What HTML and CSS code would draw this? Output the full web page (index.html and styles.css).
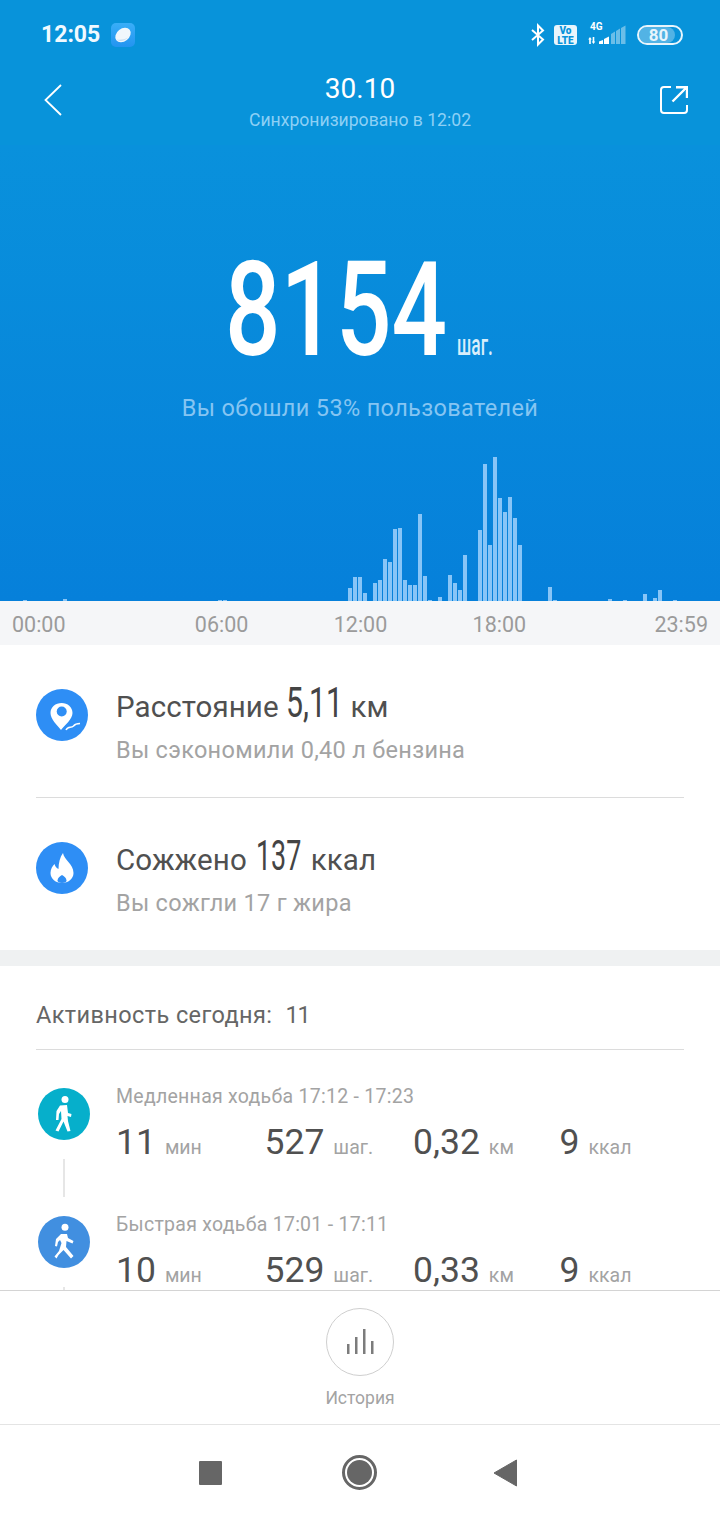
FILE: index.html
```html
<!DOCTYPE html>
<html lang="ru">
<head>
<meta charset="utf-8">
<title>30.10</title>
<link rel="stylesheet" href="styles.css">
</head>
<body>
<div class="screen">
  <div class="top">
    <div class="status">
      <div class="status-left">
        <span class="clock">12:05</span>
        <svg class="app-icon" width="24" height="24" viewBox="0 0 24 24"><defs><linearGradient id="appg" x1="0" y1="0" x2="0" y2="1"><stop offset="0" stop-color="#39aef8"/><stop offset="1" stop-color="#2394f0"/></linearGradient></defs><rect width="24" height="24" rx="5" fill="url(#appg)"/><ellipse cx="12" cy="12" rx="8.500" ry="6.300" transform="rotate(-38 12 12)" fill="#f1f7fc"/><path d="M5.500 16.500 C8 19 14 18 17 14.500 C14 16.500 9 17 5.500 16.500Z" fill="#c9dff2"/></svg>
      </div>
      <div class="status-right">
        <svg class="bt" width="16" height="24" viewBox="0 0 16 24"><path d="M2 7 L13 16.500 L8 21.500 V2.500 L13 7.500 L2 17" fill="none" stroke="#fff" stroke-width="2"/></svg>
        <span class="volte">Vo<br>LTE</span>
        <svg class="signal" width="38" height="24" viewBox="0 0 38 24"><g fill="#fff"><path d="M2 14 L3.800 16.500 H2.800 V21 H1.200 V16.500 H.200Z"/><path d="M5.500 21 L3.700 18.500 H4.700 V14 H6.300 V18.500 H7.300Z"/><path d="M11 21 V18.500 L15 17 V21Z"/><path d="M16 21 V16 L21 13.500 V21Z"/></g><g fill="#fff" opacity=".4"><path d="M23 21 V11 L27 8.500 V21Z"/><path d="M28 21 V8 L32 5.500 V21Z"/><path d="M33 21 V5 L37.500 2.500 V21Z"/></g></svg>
        <span class="four-g">4G</span>
        <span class="battery"><span class="battery-fill"></span><span class="battery-num">80</span></span>
      </div>
    </div>
    <div class="titlebar">
      <svg class="back" width="20" height="32" viewBox="0 0 20 32"><path d="M17 1 L1.500 16 L17 31" fill="none" stroke="#fff" stroke-width="1.800"/></svg>
      <div class="title">
        <div class="title-main">30.10</div>
        <div class="title-sub">Синхронизировано в 12:02</div>
      </div>
      <svg class="share" width="28" height="28" viewBox="0 0 28 28"><path d="M11 1 H4 A3 3 0 0 0 1 4 V24 A3 3 0 0 0 4 27 H24 A3 3 0 0 0 27 24 V19" fill="none" stroke="#fff" stroke-width="2"/><path d="M12.500 15.500 L26.500 1.500 M16 1.200 H27 V12" fill="none" stroke="#fff" stroke-width="2.400"/></svg>
    </div>
  </div>

  <div class="hero">
    <div class="steps"><span class="steps-num">8154</span><span class="steps-unit">шаг.</span></div>
    <div class="beat">Вы обошли 53% пользователей</div>
    <svg class="chart" width="720" height="150" viewBox="0 0 720 150">
      <g fill="#88c5f7">
        <rect x="23" y="149" width="4" height="1"/><rect x="63" y="148" width="4" height="2"/><rect x="218" y="149" width="4" height="1"/><rect x="223" y="149" width="4" height="1"/>
        <rect x="348" y="137" width="4" height="13"/><rect x="353" y="126" width="4" height="24"/><rect x="358" y="126" width="4" height="24"/><rect x="363" y="142" width="4" height="8"/>
        <rect x="373" y="132" width="4" height="18"/><rect x="378" y="129" width="4" height="21"/><rect x="383" y="108" width="4" height="42"/><rect x="388" y="111" width="4" height="39"/>
        <rect x="393" y="78" width="4" height="72"/><rect x="398" y="77" width="4" height="73"/><rect x="403" y="129" width="4" height="21"/><rect x="408" y="134" width="4" height="16"/>
        <rect x="413" y="134" width="4" height="16"/><rect x="418" y="63" width="4" height="87"/><rect x="423" y="125" width="4" height="25"/><rect x="428" y="149" width="4" height="1"/>
        <rect x="438" y="146" width="4" height="4"/><rect x="448" y="124" width="4" height="26"/><rect x="453" y="132" width="4" height="18"/><rect x="458" y="139" width="4" height="11"/>
        <rect x="463" y="104" width="4" height="46"/><rect x="478" y="79" width="4" height="71"/><rect x="483" y="13" width="4" height="137"/><rect x="488" y="94" width="4" height="56"/>
        <rect x="493" y="6" width="4" height="144"/><rect x="498" y="47" width="4" height="103"/><rect x="503" y="61" width="4" height="89"/><rect x="508" y="46" width="4" height="104"/>
        <rect x="513" y="67" width="4" height="83"/><rect x="518" y="94" width="4" height="56"/><rect x="548" y="136" width="4" height="14"/><rect x="553" y="149" width="4" height="1"/>
        <rect x="608" y="148" width="4" height="2"/><rect x="623" y="149" width="4" height="1"/><rect x="643" y="143" width="4" height="7"/><rect x="653" y="147" width="4" height="3"/>
        <rect x="658" y="139" width="4" height="11"/><rect x="673" y="149" width="4" height="1"/>
      </g>
    </svg>
  </div>

  <div class="axis"><span>00:00</span><span>06:00</span><span>12:00</span><span>18:00</span><span>23:59</span></div>

  <section class="summary">
    <div class="sum-row">
      <svg class="sum-icon" width="52" height="52" viewBox="0 0 52 52"><circle cx="26" cy="26" r="26" fill="#2e8ef5"/><path d="M25.700 14 C19.500 14 14.500 18 14.500 24 C14.500 30 21 36 25 41 C29 36 36.500 30 36.500 24 C36.500 18 31.500 14 25.700 14Z" fill="#fff"/><circle cx="25.700" cy="22.500" r="5" fill="#2e8ef5"/><path d="M30 41 C32 36.500 35 39.500 37.500 37 C39 35 41 34.500 44 34.500" fill="none" stroke="#2e8ef5" stroke-width="4"/><path d="M30 41 C32 36.500 35 39.500 37.500 37 C39 35 41 34.500 44 34.500" fill="none" stroke="#fff" stroke-width="1.500"/></svg>
      <div class="sum-text">
        <div class="sum-main">Расстояние <span class="sum-num dist">5,11</span> км</div>
        <div class="sum-sub">Вы сэкономили 0,40 л бензина</div>
      </div>
    </div>
    <div class="sum-row">
      <svg class="sum-icon" width="52" height="52" viewBox="0 0 52 52"><circle cx="26" cy="26" r="26" fill="#2e8ef5"/><path d="M27 11 C28 18 37.500 22 37.500 31 C37.500 37 32 41 26 41 C20 41 14.500 37 14.500 31 C14.500 27 16.500 24 18.500 22 C19.500 25 20.500 26 22.500 27 C22.500 21 24 15 27 11Z" fill="#fff"/><path d="M26 33 C24 34 21.500 36 21.500 38.500 C21.500 40 23 41 26 41 C29 41 30.500 40 30.500 38.500 C30.500 36 28 34 26 33Z" fill="#2e8ef5"/></svg>
      <div class="sum-text">
        <div class="sum-main">Сожжено <span class="sum-num cal">137</span> ккал</div>
        <div class="sum-sub">Вы сожгли 17 г жира</div>
      </div>
    </div>
  </section>

  <section class="activity">
    <div class="act-head"><span>Активность сегодня:</span><span class="act-count">11</span></div>
    <div class="act-list">
      <div class="act-row">
        <div class="act-rail">
          <svg width="52" height="52" viewBox="0 0 52 52"><circle cx="26" cy="26" r="26" fill="#06afcb"/><circle cx="27" cy="11.500" r="3.500" fill="#fff"/><path d="M22 17.500 L29 17 L30 25 L33.500 26 L33 29 L29.500 28 L30 33 L32.500 43 L29.500 43.500 L25.500 33.500 L20.500 43.500 L17.500 42.500 L23.500 31 L23 23 L21 26 L20.500 32 L18 32 L18.500 23Z" fill="#fff"/></svg>
          <span class="rail-line"></span>
        </div>
        <div class="act-body">
          <div class="act-label">Медленная ходьба 17:12 - 17:23</div>
          <div class="act-stats">
            <div class="stat"><b>11</b><i>мин</i></div>
            <div class="stat"><b>527</b><i>шаг.</i></div>
            <div class="stat"><b>0,32</b><i>км</i></div>
            <div class="stat"><b>9</b><i>ккал</i></div>
          </div>
        </div>
      </div>
      <div class="act-row">
        <div class="act-rail">
          <svg width="52" height="52" viewBox="0 0 52 52"><circle cx="26" cy="26" r="26" fill="#418fe0"/><circle cx="27" cy="11.300" r="3.500" fill="#fff"/><path d="M23 18 L29 18 L30 22 L35.500 25 L34.500 27.500 L28.500 25 L28 31 L35.500 40 L33 42.500 L25.500 34 L20.500 39 L18.500 42.500 L16.500 40.500 L21 35 L23.500 27 L22 24 L20 26 L19 30.500 L17 30 L18 23Z" fill="#fff"/></svg>
          <span class="rail-line"></span>
        </div>
        <div class="act-body">
          <div class="act-label">Быстрая ходьба 17:01 - 17:11</div>
          <div class="act-stats">
            <div class="stat"><b>10</b><i>мин</i></div>
            <div class="stat"><b>529</b><i>шаг.</i></div>
            <div class="stat"><b>0,33</b><i>км</i></div>
            <div class="stat"><b>9</b><i>ккал</i></div>
          </div>
        </div>
      </div>
    </div>
  </section>

  <div class="history">
    <div class="hist-btn"><svg width="30" height="26" viewBox="0 0 30 26"><g fill="#7c7c7c"><rect x="2" y="15" width="2.500" height="10"/><rect x="10" y="8" width="2.500" height="17"/><rect x="18" y="0" width="2.500" height="25"/><rect x="26" y="12" width="2.500" height="13"/></g></svg></div>
    <div class="hist-label">История</div>
  </div>

  <nav class="sysnav">
    <span class="nav-square"></span>
    <span class="nav-circle"><span class="nav-dot"></span></span>
    <svg width="24" height="28" viewBox="0 0 24 28"><path d="M23.500 1 V27 L1 14Z" fill="#666" stroke="#666" stroke-linejoin="round"/></svg>
  </nav>
</div>
</body>
</html>
```
FILE: styles.css
```css
* { box-sizing: border-box; }
html, body { margin: 0; padding: 0; }
body { font-family: Roboto, "Noto Sans", sans-serif; background: #fff; }
.screen { width: 720px; height: 1520px; overflow: hidden; display: flex; flex-direction: column; }

.top { height: 145px; background: #0893da; color: #fff; display: flex; flex-direction: column; }
.status { height: 70px; padding: 22px 37px 0 41px; display: flex; justify-content: space-between; align-items: flex-start; }
.status-left { display: flex; align-items: center; gap: 11px; }
.clock { font-size: 23px; font-weight: 700; color: #f0f9ff; line-height: 26px; }
.status-right { display: flex; align-items: center; position: relative; height: 26px; }
.bt { flex: none; }
.volte { width: 23px; height: 20px; margin-left: 8px; background: #e8f5fc; color: #0893da; border-radius: 3px; font-size: 10px; line-height: 9.500px; font-weight: 900; text-align: center; padding-top: 1px; }
.signal { margin-left: 11px; flex: none; }
.four-g { position: absolute; left: 60px; top: 0; font-size: 10px; line-height: 10px; font-weight: 700; }
.battery { width: 46px; height: 20px; border: 2px solid #e8f5fc; border-radius: 10px; position: relative; margin-left: 11px; padding-right: 3px; display: flex; align-items: center; justify-content: center; overflow: hidden; }
.battery-fill { position: absolute; left: 0; top: 0; bottom: 0; width: 85%; background: rgba(255,255,255,.3); border-radius: 8px; }
.battery-num { position: relative; font-size: 17px; font-weight: 700; line-height: 16px; color: #e8f5fc; }

.titlebar { flex: 1; padding: 0 32px 0 44px; display: flex; align-items: flex-start; justify-content: space-between; position: relative; }
.back { margin-top: 14px; }
.share { margin-top: 16px; }
.title { position: absolute; left: 0; right: 0; top: 1px; text-align: center; }
.title-main { font-size: 28px; line-height: 36px; color: #fff; }
.title-sub { font-size: 17.600px; line-height: 26px; color: #8dd0f5; }

.hero { height: 456px; background: linear-gradient(#0991dc, #0680da); position: relative; display: flex; flex-direction: column; align-items: center; }
.steps { margin-top: 95px; display: flex; align-items: baseline; height: 140px; width: 100%; padding-left: 225px; }
.steps-num { font-size: 132px; font-weight: 500; line-height: 140px; color: #fff; display: inline-block; transform: scaleX(.74); transform-origin: 0 50%; width: 221px; margin-right: 11px; }
.steps-unit { font-size: 29px; font-weight: 500; line-height: 26px; color: #d8eefb; transform: scaleX(.6); transform-origin: 0 50%; }
.beat { margin-top: 13px; font-size: 23.500px; line-height: 30px; letter-spacing: .35px; color: #85c5f2; }
.chart { position: absolute; left: 0; bottom: 0; display: block; }

.axis { height: 44px; background: #f5f6f8; color: #9b9b9b; font-size: 21.500px; line-height: 47px; display: flex; padding: 0 12px; justify-content: space-between; }
.axis span:nth-child(2) { margin-left: 44px; }
.axis span:nth-child(4) { margin-right: 43px; }

.summary { height: 305px; padding: 0 36px; background: #fff; flex: none; }
.sum-row { height: 152px; display: flex; align-items: flex-start; gap: 28px; }
.sum-row:first-child { border-bottom: 1px solid #dcdcdc; height: 153px; }
.sum-icon { flex: none; margin-top: 44px; }
.sum-text { margin-top: 38px; }
.sum-main { font-size: 29.500px; line-height: 40px; letter-spacing: .1px; color: #505050; display: flex; align-items: baseline; white-space: pre; }
.sum-num { font-size: 42px; font-weight: 400; line-height: 40px; letter-spacing: 0; color: #444; display: inline-block; transform-origin: 0 50%; }
.dist { transform: scaleX(.72); width: 55px; margin-right: 2px; }
.cal { transform: scaleX(.64); width: 45px; margin: 0 2px 0 2px; }
.sum-sub { font-size: 23.500px; line-height: 30px; margin-top: 8px; letter-spacing: .3px; color: #a3a3a3; }

.activity { border-top: 16px solid #eff1f2; height: 340px; padding: 0 36px; overflow: hidden; background: #fff; flex: none; }
.act-head { height: 84px; border-bottom: 1px solid #dcdcdc; display: flex; gap: 13px; align-items: center; font-size: 23.500px; color: #666; letter-spacing: .4px; padding-top: 14px; }
.act-count { letter-spacing: -1px; }
.act-list { padding-top: 38px; }
.act-row { display: flex; height: 128px; gap: 26px; padding-left: 2px; }
.act-rail { display: flex; flex-direction: column; align-items: center; width: 52px; flex: none; }
.rail-line { width: 2px; height: 38px; background: #e6e6e6; margin-top: 19px; }
.act-body { margin-top: -2px; }
.act-label { font-size: 19.500px; line-height: 22px; color: #a3a3a3; letter-spacing: .27px; }
.act-stats { display: flex; margin-top: 12px; }
.stat { width: 148.500px; display: flex; align-items: baseline; gap: 9px; }
.stat:nth-child(3) { width: 146.500px; }
.stat b { font-weight: 400; font-size: 35.500px; line-height: 44px; color: #505050; }
.stat i { font-style: normal; font-size: 19.500px; color: #a3a3a3; }

.history { height: 135px; border-top: 1px solid #d4d4d4; border-bottom: 1px solid #e4e4e4; background: #fff; display: flex; flex-direction: column; align-items: center; flex: none; }
.hist-btn { width: 68px; height: 68px; margin-top: 17px; border: 1px solid #cfcfcf; border-radius: 50%; display: flex; align-items: center; justify-content: center; }
.hist-label { margin-top: 10px; font-size: 17.500px; line-height: 24px; color: #a3a3a3; }

.sysnav { flex: 1; display: flex; align-items: center; padding: 0 203px 0 199px; justify-content: space-between; background: #fff; }
.nav-square { width: 23px; height: 24px; background: #666; border-radius: 1px; }
.nav-circle { width: 35px; height: 35px; margin-left: 4px; border: 3px solid #666; border-radius: 50%; display: flex; align-items: center; justify-content: center; }
.nav-dot { width: 25px; height: 25px; background: #666; border-radius: 50%; }
```
